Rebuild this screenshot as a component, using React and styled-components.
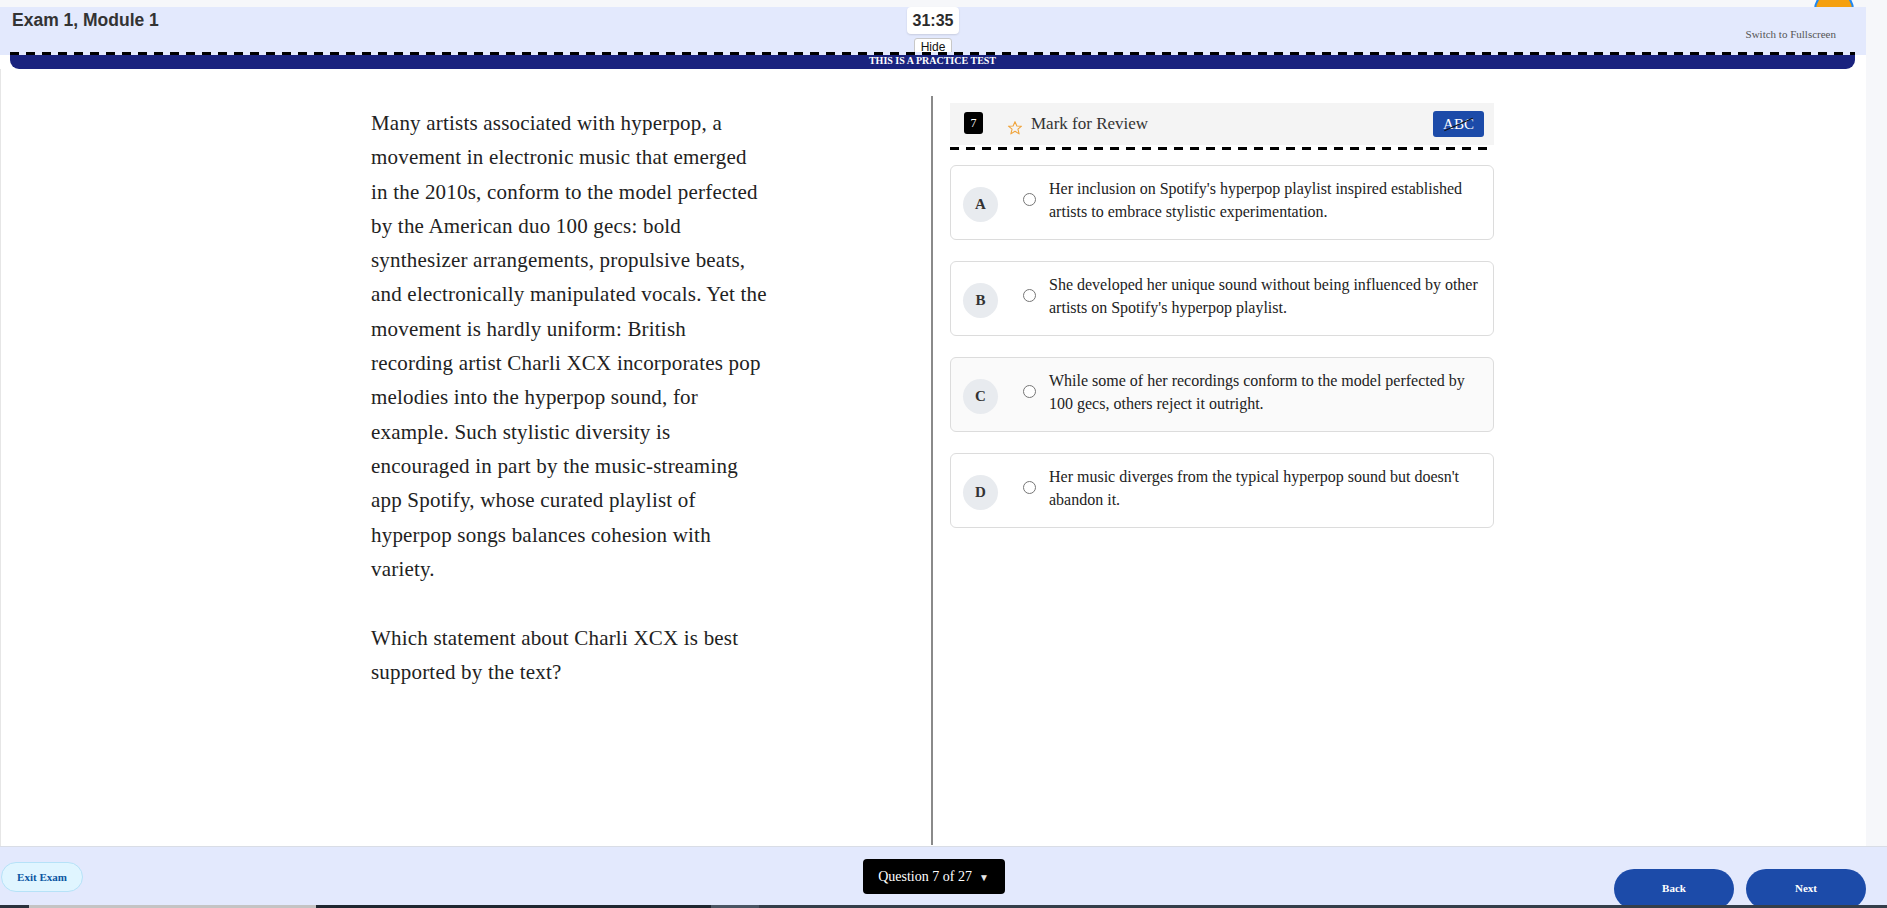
import React from 'react';
import styled, { createGlobalStyle } from 'styled-components';

const GlobalStyle = createGlobalStyle`
  html, body {
    margin: 0;
    padding: 0;
    background: #f6f7fa;
    overflow: hidden;
  }
  * {
    box-sizing: border-box;
  }
`;

const serif = `"Liberation Serif", "Times New Roman", serif`;
const sans = `"Liberation Sans", Arial, sans-serif`;

// dashed rule used under the header and the question bar
const dashes = (gap) => `repeating-linear-gradient(90deg, #000 0 9px, ${gap} 9px 16px)`;

const Page = styled.div`
  position: relative;
  height: 100vh;
  display: flex;
  flex-direction: column;
  padding-top: 7px;
  overflow: hidden;
`;

const Shell = styled.div`
  width: 1866px;
  flex: 1;
  display: flex;
  flex-direction: column;
  min-height: 0;
`;

const Bubble = styled.div`
  position: absolute;
  top: -10px;
  right: 33px;
  width: 40px;
  height: 40px;
  border-radius: 50%;
  background: #f5a00f;
  border: 2px solid #1e88f5;
  z-index: 0;
`;

const Header = styled.header`
  position: relative;
  z-index: 2;
  height: 45px;
  background: #e3e9fd;
  display: grid;
  grid-template-columns: 1fr auto 1fr;
`;

const Title = styled.h1`
  margin: 0;
  padding: 3px 0 0 12px;
  font-family: ${sans};
  font-size: 17.5px;
  font-weight: bold;
  color: #333;
`;

const TimerStack = styled.div`
  display: flex;
  flex-direction: column;
  align-items: center;
  gap: 4px;
`;

const Timer = styled.div`
  width: 52px;
  height: 27px;
  background: #fff;
  border-radius: 4px;
  box-shadow: 0 1px 2px rgba(0, 0, 0, 0.12);
  font-family: ${sans};
  font-size: 16px;
  font-weight: bold;
  color: #2b2b2b;
  display: flex;
  align-items: center;
  justify-content: center;
`;

const HideButton = styled.button`
  width: 38px;
  height: 18px;
  padding: 0;
  background: #fff;
  border: 1px solid #c8c8c8;
  border-radius: 3px;
  font-family: ${sans};
  font-size: 12px;
  color: #111;
  line-height: 16px;
`;

const FullscreenLink = styled.div`
  justify-self: end;
  padding: 21px 30px 0 0;
  font-family: ${serif};
  font-size: 11px;
  color: #555;
`;

const StripRow = styled.div`
  position: relative;
  z-index: 3;
  background: linear-gradient(to bottom, #e3e9fd 3px, #fff 3px);
  padding: 0 11px 0 10px;
`;

const PracticeStrip = styled.div`
  height: 17px;
  padding-top: 3px;
  background: ${dashes('#e3e9fd')} top / 100% 3px no-repeat, #1a237e;
  border-radius: 0 0 9px 9px;
  font-family: ${serif};
  font-size: 10px;
  font-weight: bold;
  color: #fff;
  text-align: center;
  line-height: 12px;
`;

const Main = styled.main`
  flex: 1;
  min-height: 0;
  background: #fff;
  display: flex;
  padding-top: 27px;
  padding-bottom: 1px;
  border-left: 1px solid #e6e6e6;
`;

const PassagePane = styled.section`
  width: 932px;
  display: flex;
  justify-content: flex-end;
  padding: 10px 148px 0 0;
  border-right: 2px solid #8a8a8a;
`;

const Passage = styled.div`
  width: 412px;
  font-family: ${serif};
  font-size: 21px;
  letter-spacing: 0.2px;
  line-height: 34.3px;
  color: #222;

  p {
    margin: 0 0 35px;
  }
`;

const Line = styled.span`
  display: block;
  white-space: nowrap;
`;

const QuestionPane = styled.section`
  flex: 1;
  padding: 7px 0 0 17px;
`;

const QuestionColumn = styled.div`
  width: 544px;
  display: flex;
  flex-direction: column;
  gap: 21px;
`;

const QuestionHeader = styled.div`
  height: 47px;
  margin-bottom: -6px;
  padding: 0 10px 5px 14px;
  background: ${dashes('#fff')} bottom / 100% 3px no-repeat,
    linear-gradient(#f4f4f4, #f4f4f4) top / 100% 42px no-repeat;
  display: flex;
  align-items: center;
`;

const NumberBox = styled.div`
  width: 19px;
  height: 22px;
  background: #000;
  border-radius: 3px;
  color: #fff;
  font-family: ${serif};
  font-size: 12px;
  display: flex;
  align-items: center;
  justify-content: center;
  margin-top: -2px;
`;

const MarkReview = styled.div`
  display: flex;
  align-items: center;
  gap: 8px;
  margin-left: 24px;
  font-family: ${serif};
  font-size: 17px;
  color: #333;

  svg {
    margin-top: 7px;
  }
`;

const AbcButton = styled.button`
  position: relative;
  margin-left: auto;
  width: 51px;
  height: 26px;
  background: #1c4ba9;
  border: none;
  border-radius: 3px;
  color: #fff;
  font-family: ${serif};
  font-size: 15px;
  padding: 0;

  &::after {
    content: '';
    position: absolute;
    left: 10px;
    right: 10px;
    top: 50%;
    height: 1px;
    background: #111;
    transform: rotate(-24deg);
  }
`;

const OptionCard = styled.div`
  height: 75px;
  border: 1px solid #dcdcdc;
  border-radius: 6px;
  background: ${(p) => (p.$hover ? '#fafafa' : '#fff')};
  display: flex;
  align-items: center;
  padding: 0 12px;
`;

const Letter = styled.div`
  width: 35px;
  height: 35px;
  flex-shrink: 0;
  border-radius: 50%;
  background: #e8ebef;
  font-family: ${serif};
  font-size: 15px;
  font-weight: bold;
  color: #333;
  display: flex;
  align-items: center;
  justify-content: center;
  margin-top: 3px;
`;

const Radio = styled.span`
  width: 13px;
  height: 13px;
  flex-shrink: 0;
  border: 1px solid #767676;
  border-radius: 50%;
  background: #fff;
  align-self: flex-start;
  margin: 27px 13px 0 25px;
`;

const OptionText = styled.div`
  flex: 1;
  font-family: ${serif};
  font-size: 16px;
  line-height: 23px;
  color: #222;
  margin-bottom: 5px;
`;

const Footer = styled.footer`
  height: 59px;
  flex-shrink: 0;
  background: #e3e9fd;
  border-top: 1px solid #d9dde6;
  display: grid;
  grid-template-columns: 1fr auto 1fr;
  padding: 0 21px 0 1px;
  overflow: hidden;
`;

const ExitButton = styled.button`
  justify-self: start;
  margin-top: 15px;
  width: 82px;
  height: 30px;
  background: #e0f5ff;
  border: 1px solid #b6e2f8;
  border-radius: 15px;
  color: #0b56a2;
  font-family: ${serif};
  font-size: 11px;
  font-weight: bold;
  padding: 0;
`;

const QuestionNav = styled.button`
  margin-top: 12px;
  width: 142px;
  height: 35px;
  background: #000;
  border: none;
  border-radius: 4px;
  color: #fff;
  font-family: ${serif};
  font-size: 14px;
  padding: 0;

  span {
    font-size: 10px;
    margin-left: 7px;
    color: #e6e6e6;
  }
`;

const NavGroup = styled.div`
  justify-self: end;
  display: flex;
  gap: 12px;
  margin-top: 22px;
`;

const NavButton = styled.button`
  width: 120px;
  height: 40px;
  background: #1c4ba9;
  border: none;
  border-radius: 20px;
  color: #fff;
  font-family: ${serif};
  font-size: 11px;
  font-weight: bold;
  padding: 0 0 2px;
`;

const BottomStrip = styled.div`
  height: 3px;
  flex-shrink: 0;
  display: flex;
  background: #343e4a;
`;

const StripPiece = styled.div`
  width: ${(p) => p.$w}px;
  background: ${(p) => p.$c};
`;

const Star = () => (
  <svg width="16" height="16" viewBox="0 0 24 24" fill="none" stroke="#f0a33a" strokeWidth="1.6" strokeLinejoin="round">
    <polygon points="12,2.5 14.8,9 21.8,9.3 16.4,13.8 18.2,20.8 12,16.9 5.8,20.8 7.6,13.8 2.2,9.3 9.2,9" />
  </svg>
);

const passageLines = [
  'Many artists associated with hyperpop, a',
  'movement in electronic music that emerged',
  'in the 2010s, conform to the model perfected',
  'by the American duo 100 gecs: bold',
  'synthesizer arrangements, propulsive beats,',
  'and electronically manipulated vocals. Yet the',
  'movement is hardly uniform: British',
  'recording artist Charli XCX incorporates pop',
  'melodies into the hyperpop sound, for',
  'example. Such stylistic diversity is',
  'encouraged in part by the music-streaming',
  'app Spotify, whose curated playlist of',
  'hyperpop songs balances cohesion with',
  'variety.',
];

const promptLines = ['Which statement about Charli XCX is best', 'supported by the text?'];

const options = [
  { key: 'A', text: "Her inclusion on Spotify's hyperpop playlist inspired established artists to embrace stylistic experimentation." },
  { key: 'B', text: "She developed her unique sound without being influenced by other artists on Spotify's hyperpop playlist." },
  { key: 'C', text: 'While some of her recordings conform to the model perfected by 100 gecs, others reject it outright.', hover: true },
  { key: 'D', text: "Her music diverges from the typical hyperpop sound but doesn't abandon it." },
];

export default function App() {
  return (
    <>
      <GlobalStyle />
      <Page>
        <Bubble />
        <Shell>
          <Header>
            <Title>Exam 1, Module 1</Title>
            <TimerStack>
              <Timer>31:35</Timer>
              <HideButton>Hide</HideButton>
            </TimerStack>
            <FullscreenLink>Switch to Fullscreen</FullscreenLink>
          </Header>
          <StripRow>
            <PracticeStrip>THIS IS A PRACTICE TEST</PracticeStrip>
          </StripRow>
          <Main>
            <PassagePane>
              <Passage>
                <p>
                  {passageLines.map((l) => (
                    <Line key={l}>{l}</Line>
                  ))}
                </p>
                <p>
                  {promptLines.map((l) => (
                    <Line key={l}>{l}</Line>
                  ))}
                </p>
              </Passage>
            </PassagePane>
            <QuestionPane>
              <QuestionColumn>
                <QuestionHeader>
                  <NumberBox>7</NumberBox>
                  <MarkReview>
                    <Star />
                    Mark for Review
                  </MarkReview>
                  <AbcButton>ABC</AbcButton>
                </QuestionHeader>
                {options.map((o) => (
                  <OptionCard key={o.key} $hover={o.hover}>
                    <Letter>{o.key}</Letter>
                    <Radio />
                    <OptionText>{o.text}</OptionText>
                  </OptionCard>
                ))}
              </QuestionColumn>
            </QuestionPane>
          </Main>
        </Shell>
        <Footer>
          <ExitButton>Exit Exam</ExitButton>
          <QuestionNav>
            Question 7 of 27<span>▼</span>
          </QuestionNav>
          <NavGroup>
            <NavButton>Back</NavButton>
            <NavButton>Next</NavButton>
          </NavGroup>
        </Footer>
        <BottomStrip>
          <StripPiece $w={29} $c="#2a323d" />
          <StripPiece $w={287} $c="#c4c4c4" />
          <StripPiece $w={395} $c="#1f2730" />
          <StripPiece $w={48} $c="#4a5563" />
        </BottomStrip>
      </Page>
    </>
  );
}
